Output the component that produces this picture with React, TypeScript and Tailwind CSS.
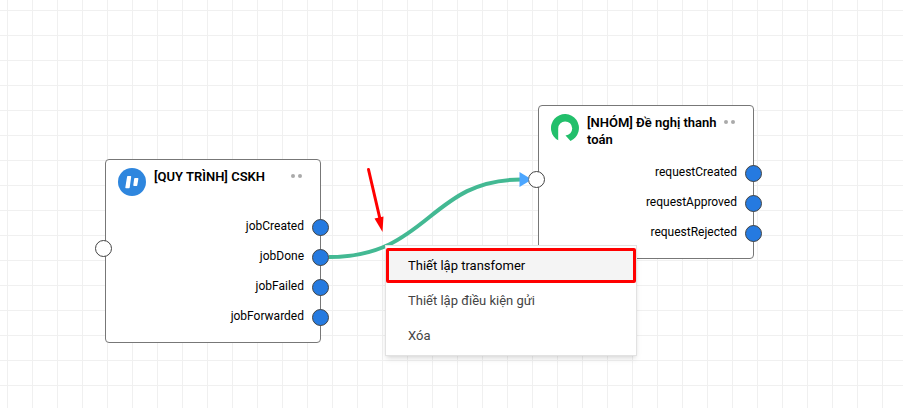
import type { ReactNode } from "react";

type Node = {
    id: string;
    title: string;
    logo: ReactNode;
    position: string;
    outputs: string[];
};

const JobLogo = () => (
    <svg viewBox="0 0 28 28" className="size-7 shrink-0">
        <circle cx="14" cy="14" r="14" fill="#2e86de" />
        <path
            d="M9.8 8.7h2.7l-1.5 10.8H8zM16.9 10.7h2.8l-1.1 6.5h-2.6z"
            fill="#fff"
            stroke="#fff"
            strokeWidth="1.4"
            strokeLinejoin="round"
        />
    </svg>
);

const RequestLogo = () => (
    <svg viewBox="0 0 28 28" className="size-7 shrink-0">
        <path
            d="M7.2 26.3A14 14 0 1 1 19.5 26.9L14.5 21.4A7 7 0 1 0 7.2 14.4z"
            fill="#22bf6b"
        />
    </svg>
);

const nodes: Node[] = [
    {
        id: "job",
        title: "[QUY TRÌNH] CSKH",
        logo: <JobLogo />,
        position: "left-[105px] top-[159px]",
        outputs: ["jobCreated", "jobDone", "jobFailed", "jobForwarded"],
    },
    {
        id: "request",
        title: "[NHÓM] Đề nghị thanh toán",
        logo: <RequestLogo />,
        position: "left-[538px] top-[105px]",
        outputs: ["requestCreated", "requestApproved", "requestRejected"],
    },
];

const menuItems = ["Thiết lập transfomer", "Thiết lập điều kiện gửi", "Xóa"];

const FlowNode = ({ node }: { node: Node }) => (
    <section
        className={`absolute w-[216px] rounded-[4px] border border-[#777] bg-white pb-[10px] ${node.position}`}
    >
        <header className="flex h-[52px] items-start pt-2 pr-[18px] pl-3">
            {node.logo}
            <h2 className="ml-2 flex-1 text-[13px] leading-[17px] font-semibold text-black">
                {node.title}
            </h2>
            <button
                type="button"
                aria-label="Tùy chọn"
                className="flex h-4 items-center gap-[3px]"
            >
                <span className="size-1 rounded-full bg-[#aaa]" />
                <span className="size-1 rounded-full bg-[#aaa]" />
            </button>
        </header>
        <ul>
            {node.outputs.map((output) => (
                <li
                    key={output}
                    className="relative h-[30px] pt-[6px] pr-4 text-right text-[12px] leading-[17px] text-black"
                >
                    {output}
                    <span className="absolute top-[7px] -right-[9px] size-[17px] rounded-full border border-[#444] bg-[#257ae0]" />
                </li>
            ))}
        </ul>
        <span className="absolute top-1/2 -left-[11px] -mt-[11px] size-[17px] rounded-full border border-[#444] bg-white" />
    </section>
);

const App = () => {
    return (
        <main className="relative min-h-screen w-full overflow-hidden bg-white bg-[linear-gradient(to_right,#f0f0f0_1px,transparent_1px),linear-gradient(to_bottom,#f0f0f0_1px,transparent_1px)] bg-[size:25px_25px] bg-[position:7px_10px] font-[Roboto,sans-serif]">
            {nodes.map((node) => (
                <FlowNode key={node.id} node={node} />
            ))}

            {/* connection from jobDone to the request node */}
            <svg
                width="216"
                height="106"
                viewBox="320 160 216 106"
                className="pointer-events-none absolute top-[160px] left-[320px]"
                fill="none"
            >
                <path
                    d="M329 257C429 257 429 179.500 521 179.500"
                    stroke="#43b993"
                    strokeWidth="4"
                />
                <path
                    d="M519.500 172L528.500 177.500V181.500L519.500 187z"
                    fill="#4ca6ff"
                />
                <path
                    d="M368.500 169.500L380 219"
                    stroke="#f00"
                    strokeWidth="3"
                    strokeLinecap="round"
                />
                <path d="M374.500 218.500L383.500 216.500L382.500 232z" fill="#f00" />
            </svg>

            <menu className="absolute top-[245px] left-[385px] w-[252px] border border-[#e2e2e2] bg-white py-[2px] shadow-md">
                {menuItems.map((item, index) => (
                    <li key={item}>
                        <button
                            type="button"
                            className={
                                index === 0
                                    ? "block h-[35px] w-full rounded-[2px] border-3 border-[#f00] bg-[#f4f4f4] pl-[19px] text-left text-[13px] text-black"
                                    : "block h-[35px] w-full pl-[22px] text-left text-[13px] text-[#444]"
                            }
                        >
                            {item}
                        </button>
                    </li>
                ))}
            </menu>
        </main>
    );
};

export default App;
